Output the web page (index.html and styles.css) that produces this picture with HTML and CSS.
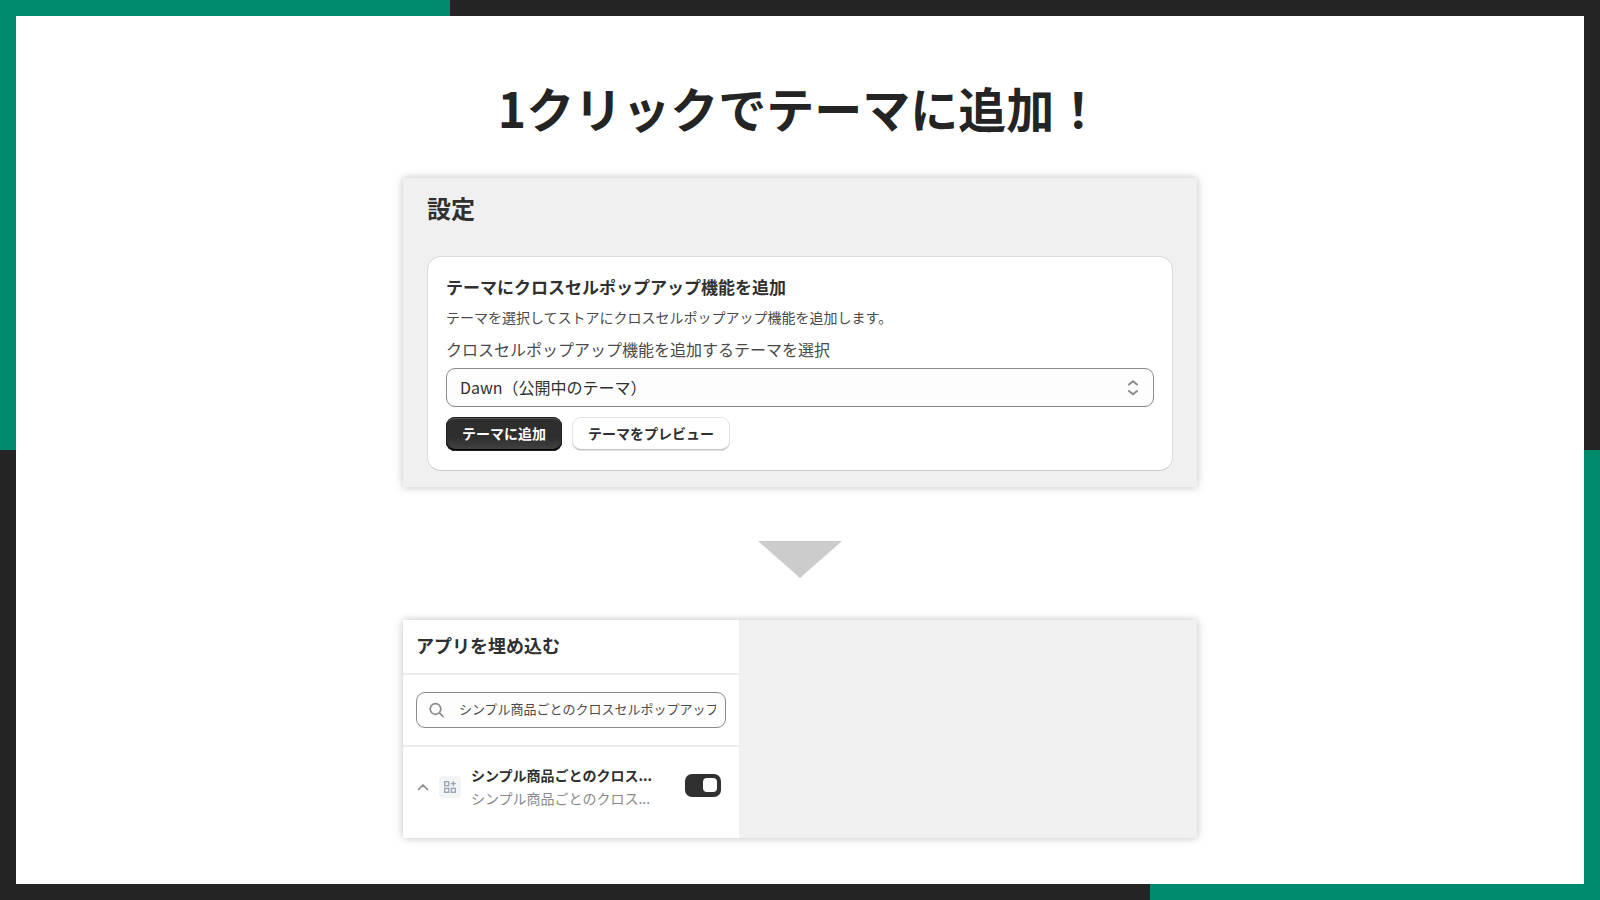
FILE: index.html
```html
<!DOCTYPE html>
<html lang="ja">
<head>
	<meta charset="UTF-8">
	<meta name="viewport" content="width=device-width, initial-scale=1">

	<title>1クリックでテーマに追加&#xFF01;</title>

	<link rel="stylesheet" href="styles.css">
</head>
<body>

	<main class="frame">
		<div class="slide">
			<h1>1クリックでテーマに追加&#xFF01;</h1>

			<section class="panel settings">
				<h2>設定</h2>

				<form class="card">
					<h3>テーマにクロスセルポップアップ機能を追加</h3>
					<p>テーマを選択してストアにクロスセルポップアップ機能を追加します。</p>

					<label for="theme">クロスセルポップアップ機能を追加するテーマを選択</label>
					<div class="select">
						<select id="theme">
							<option>Dawn&#xFF08;公開中のテーマ&#xFF09;</option>
						</select>
						<svg width="12" height="18" viewBox="0 0 12 18" aria-hidden="true">
							<path d="M2 5.5 L6 2.2 L10 5.5 M2 12 L6 15.3 L10 12"/>
						</svg>
					</div>

					<div class="buttons">
						<button type="button" class="primary">テーマに追加</button>
						<button type="button" class="secondary">テーマをプレビュー</button>
					</div>
				</form>
			</section>

			<svg class="arrow" width="84" height="37" viewBox="0 0 84 37" aria-hidden="true">
				<path d="M0 0 H84 L42 37 Z"/>
			</svg>

			<section class="panel embed">
				<div class="sidebar">
					<h2>アプリを埋め込む</h2>

					<div class="searchrow">
						<div class="search">
							<svg width="16" height="16" viewBox="0 0 16 16" aria-hidden="true">
								<circle cx="6.5" cy="7" r="5.3"/>
								<path d="M10.5 11 L14 14.5"/>
							</svg>
							<input type="text" aria-label="検索" value="シンプル商品ごとのクロスセルポップアップ">
						</div>
					</div>

					<div class="app">
						<button type="button" class="collapse" aria-label="閉じる">
							<svg width="12" height="8" viewBox="0 0 12 8" aria-hidden="true">
								<path d="M1.5 6.5 L6 2 L10.5 6.5"/>
							</svg>
						</button>
						<svg class="appicon" width="22" height="22" viewBox="0 0 22 22" aria-hidden="true">
							<rect x="5.7" y="5.7" width="4" height="4"/>
							<rect x="5.7" y="12.3" width="4" height="4"/>
							<rect x="12.3" y="12.3" width="4" height="4"/>
							<path d="M14.3 5.7 V9.7 M12.3 7.7 H16.3"/>
						</svg>
						<label class="names" for="enabled">
							<strong>シンプル商品ごとのクロス...</strong>
							<span>シンプル商品ごとのクロス...</span>
						</label>
						<input type="checkbox" id="enabled" class="toggle" checked>
					</div>
				</div>
			</section>
		</div>
	</main>

</body>
</html>
```
FILE: styles.css
```css
* {
	box-sizing: border-box;
}

body {
	margin: 0;
	font-family: "Noto Sans CJK JP", sans-serif;
	color: #303030;
}

h1, h2, h3, p {
	margin: 0;
}

svg {
	flex: none;
	fill: none;
	stroke: #8a8a8a;
	stroke-width: 2;
	stroke-linecap: round;
	stroke-linejoin: round;
}

button, input, select {
	font-family: inherit;
	color: inherit;
}

/* green corners on a dark border */
.frame {
	display: flex;
	min-height: 100vh;
	padding: 16px;
	background:
		linear-gradient(#008a6e, #008a6e) 0 0 / 450px 50% no-repeat,
		linear-gradient(#008a6e, #008a6e) 100% 100% / 450px 50% no-repeat,
		#242424;
}

.slide {
	flex: 1;
	display: flex;
	flex-direction: column;
	align-items: center;
	padding: 55px 24px 24px;
	background: #fff;
}

h1 {
	font-size: 48px;
	line-height: 72px;
	color: #242424;
}

.panel {
	width: 100%;
	max-width: 794px;
	background: #f0f0f0;
	box-shadow: 0 0 8px rgba(0, 0, 0, 0.25);
}

.settings {
	margin-top: 35px;
	padding: 12px 24px 16px;
}

.settings h2 {
	font-size: 24px;
	line-height: 36px;
}

.card {
	margin-top: 30px;
	padding: 18px 18px 19px;
	border: 1px solid #dcdcdc;
	border-bottom-color: #cacaca;
	border-radius: 14px;
	background: #fff;
}

.card h3 {
	font-size: 17px;
	line-height: 24px;
}

.card p {
	margin-top: 6px;
	font-size: 14px;
	line-height: 24px;
	color: #4a4a4a;
}

.card label {
	display: block;
	margin-top: 8px;
	font-size: 16px;
	line-height: 24px;
	color: #4a4a4a;
}

.select {
	display: grid;
	align-items: center;
	margin-top: 7px;
}

.select select {
	grid-area: 1 / 1;
	appearance: none;
	width: 100%;
	height: 39px;
	padding: 0 13px 2px;
	border: 1px solid #8a8a8a;
	border-radius: 9px;
	font-size: 16px;
	background: #fdfdfd;
}

.select svg {
	grid-area: 1 / 1;
	justify-self: end;
	margin-right: 15px;
	pointer-events: none;
}

.buttons {
	display: flex;
	gap: 10px;
	margin-top: 10px;
}

.buttons button {
	height: 34px;
	padding: 0 16px 2px;
	border: 0;
	border-radius: 9px;
	font-size: 14px;
	font-weight: 700;
}

.primary {
	color: #fff;
	background: linear-gradient(#2e2e2e 60%, #444);
	box-shadow: inset 0 0 0 1px #222, inset 0 -2px 0 #000, inset 0 2px 0 #555;
}

.secondary {
	background: #fff;
	box-shadow: inset 0 0 0 1px #e3e3e3, inset 0 -2px 0 #c4c4c4;
}

.arrow {
	margin: 54px 0 42px;
	fill: #ccc;
	stroke: none;
}

/* app embed list */
.embed {
	display: flex;
}

.sidebar {
	flex: 0 1 336px;
	min-width: 0;
	background: #fff;
}

.sidebar h2 {
	padding: 11px 13px 14px;
	font-size: 18px;
	line-height: 28px;
}

.searchrow {
	padding: 17px 13px;
	border: solid #ebebeb;
	border-width: 2px 0;
}

.search {
	display: flex;
	align-items: center;
	gap: 14px;
	height: 36px;
	padding: 0 9px 0 12px;
	border: 1px solid #8a8a8a;
	border-radius: 9px;
	background: #fdfdfd;
}

.search svg, .collapse svg {
	stroke-width: 1.7;
}

.search input {
	flex: 1;
	min-width: 0;
	height: 28px;
	padding: 0 0 4px;
	border: 0;
	outline: 0;
	font-size: 13px;
	color: #4a4a4a;
	background: none;
}

.app {
	display: flex;
	align-items: center;
	padding: 17px 18px 28px 14px;
}

.collapse {
	display: flex;
	padding: 0;
	border: 0;
	background: none;
}

.appicon {
	margin: 0 10px;
	border-radius: 4px;
	background: #f2f4f6;
	stroke: #97a3b3;
	stroke-width: 1.3;
	stroke-linejoin: miter;
}

.names {
	flex: 1;
	display: flex;
	flex-direction: column;
	font-size: 14px;
	line-height: 23px;
}

.names span {
	color: #8a8a8a;
}

.toggle {
	appearance: none;
	display: flex;
	align-items: center;
	width: 36px;
	height: 23px;
	margin: 0 0 4px;
	padding: 4px;
	border-radius: 7px;
	background: #8a8a8a;
}

.toggle::before {
	content: "";
	width: 14px;
	height: 14px;
	border-radius: 4px;
	background: #fff;
}

.toggle:checked {
	justify-content: flex-end;
	background: #303030;
}
```
